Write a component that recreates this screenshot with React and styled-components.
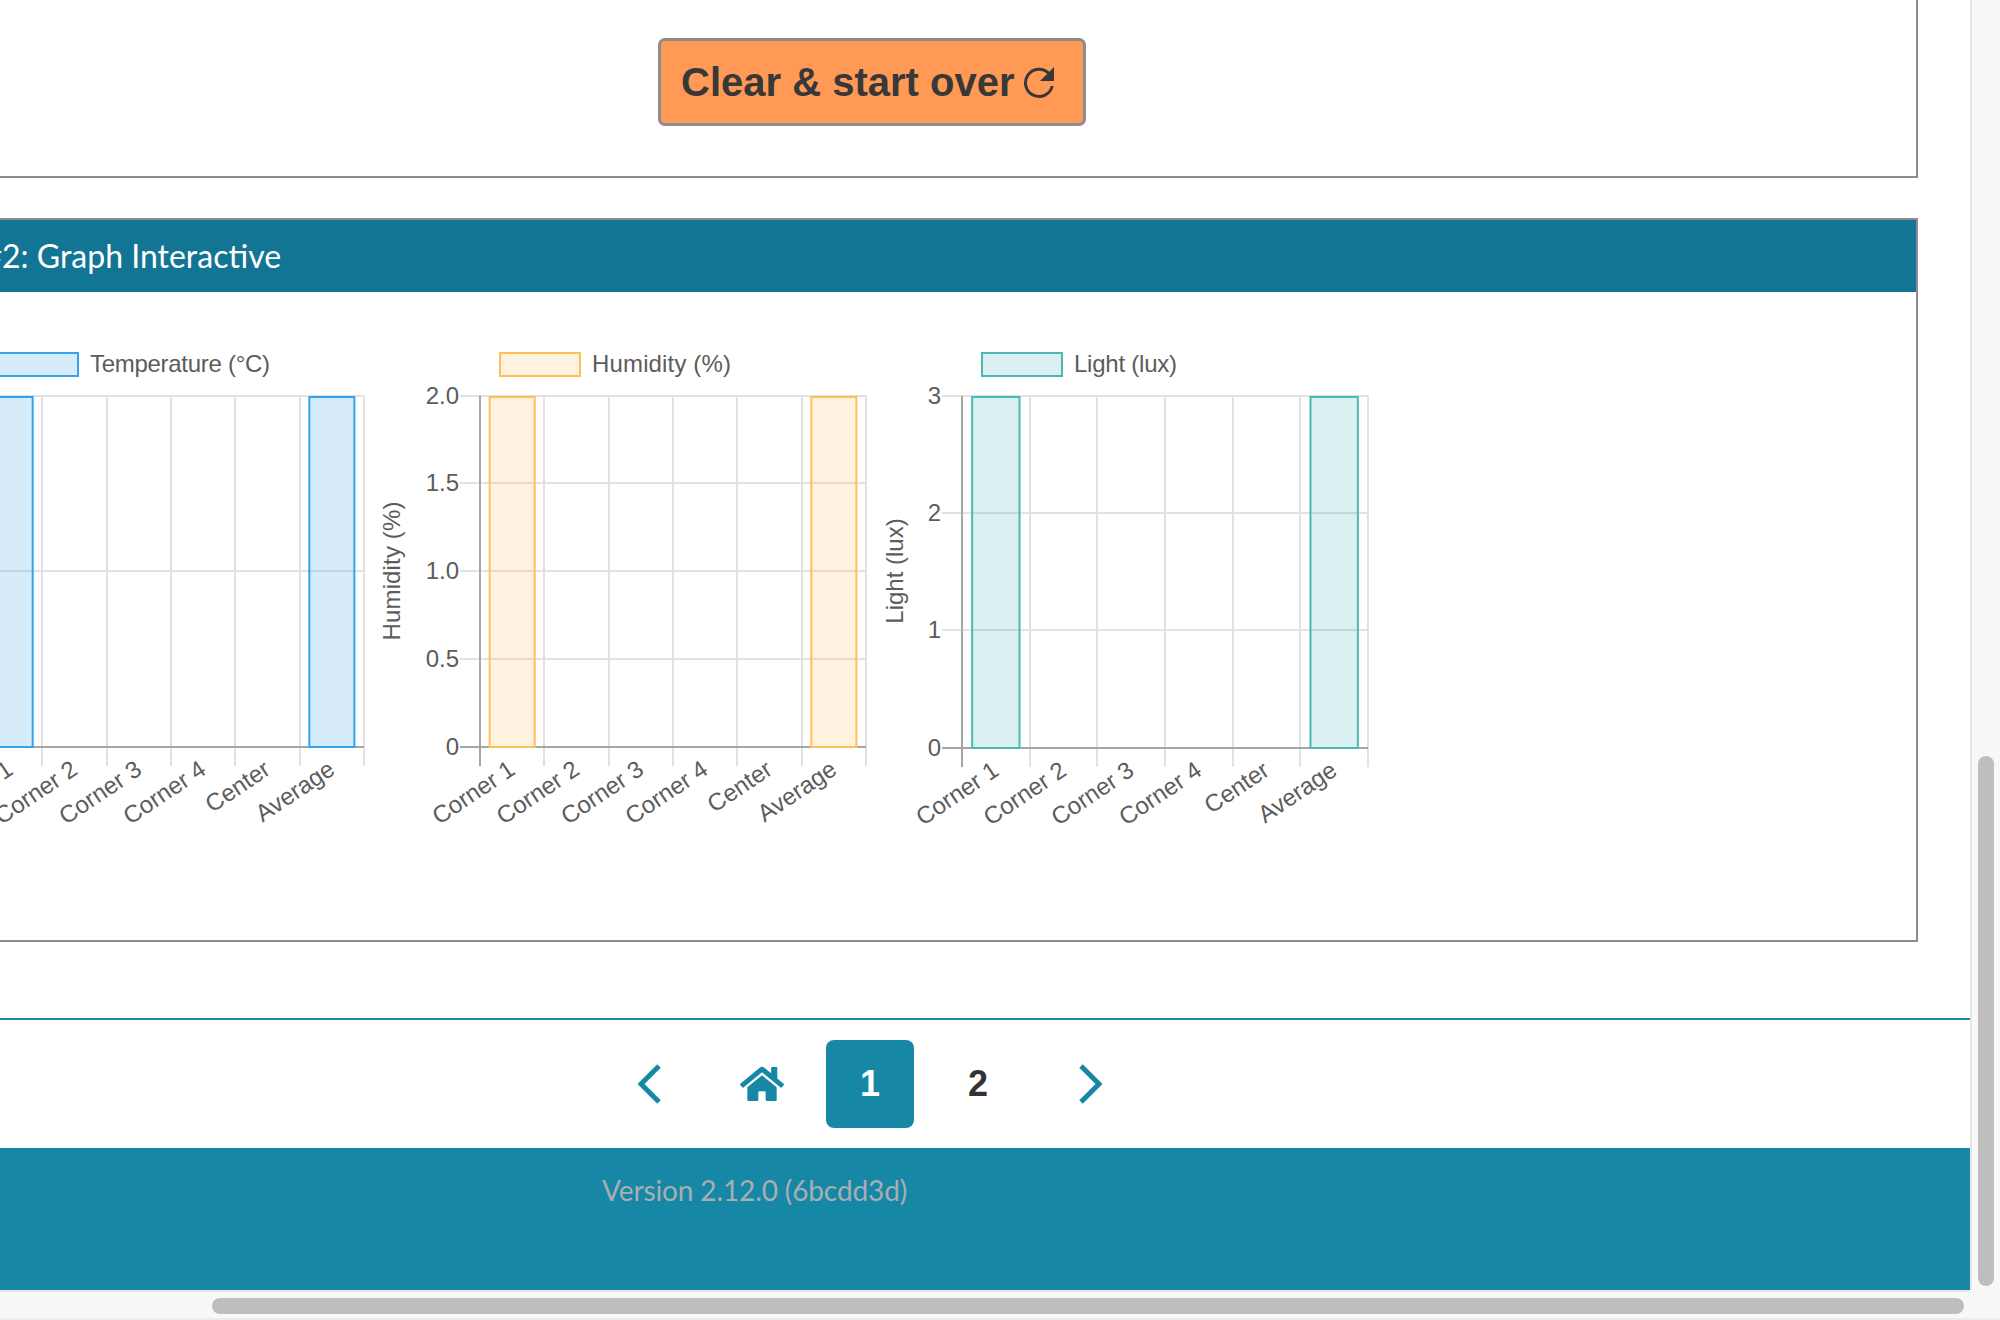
import React from 'react'
import styled, { createGlobalStyle } from 'styled-components'
import { FaHome } from 'react-icons/fa'

const GlobalStyle = createGlobalStyle`
  html, body {
    margin: 0;
    height: 100%;
    overflow: hidden;
    background: #fff;
    font-family: "Liberation Sans", Arial, sans-serif;
  }
`

const Shell = styled.div`
  display: grid;
  grid-template-columns: 1970px 30px;
  grid-template-rows: 1290px 30px;
  width: 2000px;
  height: 1320px;
`

const Viewport = styled.main`
  overflow: hidden;
  background: #fff;
`

// the page is scrolled sideways in the shot, so the content starts left of the window
const Content = styled.div`
  width: 2220px;
  margin-left: -240px;
`

const Card = styled.section`
  margin: ${p => p.$top || 0}px 62px 0 64px;
  border: 2px solid #8c8c8c;
  border-top-width: ${p => (p.$cut ? 0 : 2)}px;
  background: #fff;
`

const ButtonRow = styled.div`
  display: flex;
  justify-content: center;
  padding: 38px 0 50px 2px;
`

const ClearButton = styled.button`
  display: flex;
  align-items: center;
  gap: 8px;
  box-sizing: border-box;
  width: 428px;
  height: 88px;
  padding: 0 0 0 20px;
  border: 3px solid #8c8c8c;
  border-radius: 7px;
  background: #ff9955;
  color: #383838;
  font: bold 40px "Liberation Sans", Arial, sans-serif;
`

const CardHeader = styled.h2`
  margin: 0;
  height: 72px;
  padding-left: 157.5px;
  background: #127594;
  color: #fff;
  font: 400 32px/72px Lato, sans-serif;
  white-space: nowrap;
`

const ChartRow = styled.div`
  display: flex;
  padding: 48px 0 100px 46px;
`

const ChartSvg = styled.svg`
  display: block;
  flex: none;
  width: 502px;
  height: 500px;
`

const ChartText = styled.text`
  fill: #5c5c5c;
  font: 24px "Liberation Sans", Arial, sans-serif;
`

const Pager = styled.nav`
  display: flex;
  justify-content: center;
  gap: 20px;
  margin-top: 76px;
  padding: 20px 0;
  border-top: 2px solid #1688a6;
`

const PageLink = styled.a`
  display: flex;
  align-items: center;
  justify-content: center;
  width: ${p => (p.$arrow ? 96 : 88)}px;
  height: 88px;
  border-radius: 8px;
  background: ${p => (p.$active ? '#1688a6' : 'transparent')};
  color: ${p => (p.$active ? '#fff' : p.$icon ? '#1688a6' : '#333')};
  font: bold 36px "Liberation Sans", Arial, sans-serif;
`

const Footer = styled.footer`
  box-sizing: border-box;
  height: 142px;
  padding: 25px 0 0 842px;
  background: #1688a6;
  color: #a9aeb2;
  font: 400 28px/34px Lato, sans-serif;
  letter-spacing: -0.12px;
`

const VerticalTrack = styled.div`
  box-sizing: border-box;
  padding: 756px 6px 4px 6px;
  border-left: 2px solid #e6e6e6;
  background: #f8f8f8;
`

const HorizontalTrack = styled.div`
  box-sizing: border-box;
  padding: 6px 0 4px 212px;
  border-top: 2px solid #e6e6e6;
  border-bottom: 2px solid #ececec;
  background: #f8f8f8;
`

const Corner = styled.div`
  background: #f8f8f8;
  border-bottom: 2px solid #ececec;
`

const VerticalThumb = styled.div`
  width: 16px;
  height: 530px;
  border-radius: 8px;
  background: #bebebe;
`

const HorizontalThumb = styled.div`
  width: 1752px;
  height: 16px;
  border-radius: 8px;
  background: #bebebe;
`

const TOP = 56
const RIGHT = 492
const LABELS = ['Corner 1', 'Corner 2', 'Corner 3', 'Corner 4', 'Center', 'Average']

const charts = [
  { name: 'Temperature (°C)', nameWidth: 180, color: '#36a2eb', left: 106, bottom: 407, legend: 126, ticks: ['0', '1', '2'] },
  { name: 'Humidity (%)', nameWidth: 139, title: 'Humidity (%)', titleX: 26, color: '#ffc05a', left: 106, bottom: 407, legend: 126, ticks: ['0', '0.5', '1.0', '1.5', '2.0'] },
  { name: 'Light (lux)', nameWidth: 103, title: 'Light (lux)', titleX: 27, color: '#4bb8b8', left: 86, bottom: 408, legend: 106, ticks: ['0', '1', '2', '3'] },
]

function BarChart({ name, nameWidth, title, titleX, color, left, bottom, legend, ticks }) {
  const cell = (RIGHT - left) / 6
  const barWidth = cell * 0.7
  const tickY = i => Math.floor(bottom - (i * (bottom - TOP)) / (ticks.length - 1))

  return (
    <ChartSvg viewBox="0 0 502 500">
      <rect x={legend} y={13} width={80} height={23} fill={color} fillOpacity="0.2" stroke={color} strokeWidth="2" />
      <ChartText x={legend + 92} y={32} textLength={nameWidth}>{name}</ChartText>

      {ticks.map((t, i) => (
        <g key={t}>
          <line x1={left - 20} x2={RIGHT} y1={tickY(i)} y2={tickY(i)} stroke={i === 0 ? '#a6a6a6' : '#e2e2e2'} strokeWidth="2" />
          <ChartText x={left - 21} y={tickY(i) + 8} textAnchor="end">{t}</ChartText>
        </g>
      ))}

      {LABELS.map((l, i) => {
        const x = Math.round(left + cell * (i + 1))
        const center = left + cell * (i + 0.5)
        return (
          <g key={l}>
            <line x1={x} x2={x} y1={TOP} y2={bottom + 19} stroke="#e2e2e2" strokeWidth="2" />
            <ChartText textAnchor="end" transform={`translate(${center + 4.5} ${bottom + 26}) rotate(-34)`}>{l}</ChartText>
          </g>
        )
      })}

      <line x1={left} x2={left} y1={TOP} y2={bottom + 19} stroke="#a6a6a6" strokeWidth="2" />
      <line x1={left - 20} x2={RIGHT} y1={bottom} y2={bottom} stroke="#a6a6a6" strokeWidth="2" />

      {[0, 5].map(i => (
        <rect
          key={i}
          x={left + cell * (i + 0.5) - barWidth / 2}
          y={TOP + 1}
          width={barWidth}
          height={bottom - TOP - 1}
          fill={color}
          fillOpacity="0.2"
          stroke={color}
          strokeWidth="2"
        />
      ))}

      {title && (
        <ChartText textAnchor="middle" textLength={title.length > 11 ? 139 : undefined} transform={`translate(${titleX} 231) rotate(-90)`}>{title}</ChartText>
      )}
    </ChartSvg>
  )
}

const RefreshIcon = () => (
  <svg width="34" height="34" viewBox="0 0 34 34">
    <path d="M27 8.5A13.6 13.6 0 1 0 30.3 21" fill="none" stroke="#383838" strokeWidth="3" />
    <path d="M32 2V16H18Z" fill="#383838" />
  </svg>
)

const Chevron = ({ flip }) => (
  <svg width="24" height="40" viewBox="0 0 24 40">
    <path d={flip ? 'M3 2L21 20L3 38' : 'M21 2L3 20L21 38'} fill="none" stroke="#1688a6" strokeWidth="5" />
  </svg>
)

export default function App() {
  return (
    <Shell>
      <GlobalStyle />
      <Viewport>
        <Content>
          <Card $cut>
            <ButtonRow>
              <ClearButton>Clear &amp; start over <RefreshIcon /></ClearButton>
            </ButtonRow>
          </Card>

          <Card $top={40}>
            <CardHeader>#2: Graph Interactive</CardHeader>
            <ChartRow>
              {charts.map(c => <BarChart key={c.name} {...c} />)}
            </ChartRow>
          </Card>

          <Pager>
            <PageLink $arrow $icon><Chevron /></PageLink>
            <PageLink $icon><FaHome size={44} /></PageLink>
            <PageLink $active>1</PageLink>
            <PageLink>2</PageLink>
            <PageLink $arrow $icon><Chevron flip /></PageLink>
          </Pager>

          <Footer>Version 2.12.0 (6bcdd3d)</Footer>
        </Content>
      </Viewport>
      <VerticalTrack><VerticalThumb /></VerticalTrack>
      <HorizontalTrack><HorizontalThumb /></HorizontalTrack>
      <Corner />
    </Shell>
  )
}
